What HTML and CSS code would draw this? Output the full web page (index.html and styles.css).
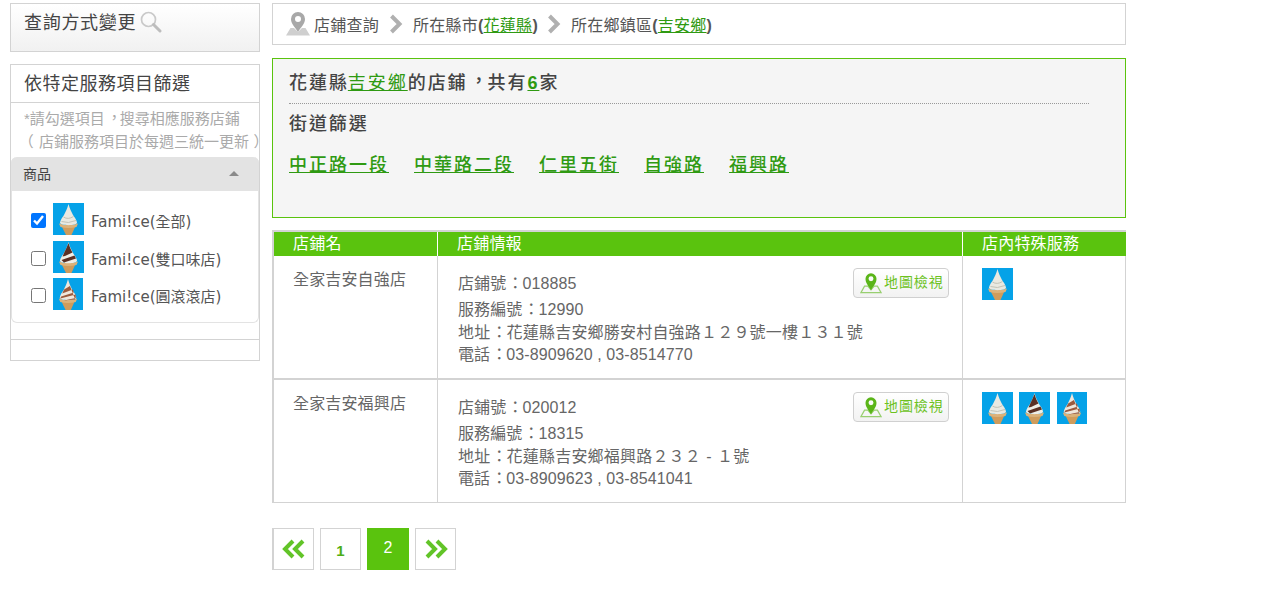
FILE: index.html
```html
<!DOCTYPE html>
<html lang="zh-TW">
<head>
<meta charset="utf-8">
<title>店舖查詢</title>
<link rel="stylesheet" href="styles.css">
</head>
<body>
<svg class="defs" width="0" height="0" aria-hidden="true">
  <defs>
    <g id="cone">
      <rect width="31" height="32" fill="#05a2e8"/>
      <path d="M8 22 L23 22 L18.500 32 L13 32 Z" fill="#cf9c5c"/>
      <path d="M6 20.500 Q15.500 24 25 20.500 L23.500 24 Q15.500 26 7.500 24 Z" fill="#dbb27a"/>
    </g>
    <symbol id="ice-all" viewBox="0 0 31 32" preserveAspectRatio="none">
      <use href="#cone"/>
      <path d="M15.500 1 C16.500 5 18.500 9 20 12 C21.500 14 23.500 17 24 19.500 C24.500 23 6.500 23 7 19.500 C7.500 17 9.500 14 11 12 C12.500 9 14.500 5 15.500 1 Z" fill="#e9e9e1"/>
      <path d="M10.500 14 Q15 17 20.500 13.500 M8.500 18.500 Q15 21 23 17.500" stroke="#c2c2b6" stroke-width="1" fill="none"/>
    </symbol>
    <symbol id="ice-twin" viewBox="0 0 31 32" preserveAspectRatio="none">
      <use href="#cone"/>
      <path d="M15.500 1 C16.500 5 18.500 9 20 12 C21.500 14 23.500 17 24 19.500 C24.500 23 6.500 23 7 19.500 C7.500 17 9.500 14 11 12 C12.500 9 14.500 5 15.500 1 Z" fill="#efeee6"/>
      <path d="M15.500 2 C16.500 6 18 9 19.500 11.500 L12 15 L9.500 15.500 L11.500 11 C13 8 14.500 5 15.500 2 Z M8.500 19 L21.500 14.500 L23 17.500 L11 21.500 Z" fill="#5a3024"/>
    </symbol>
    <symbol id="ice-choco" viewBox="0 0 31 32" preserveAspectRatio="none">
      <use href="#cone"/>
      <path d="M15.500 1 C16.500 5 18.500 9 20 12 C21.500 14 23.500 17 24 19.500 C24.500 23 6.500 23 7 19.500 C7.500 17 9.500 14 11 12 C12.500 9 14.500 5 15.500 1 Z" fill="#f0e7dc"/>
      <path d="M15.500 3 L17.500 8 L11.500 11.500 L9.500 15.500 L20.500 11.500 L21.500 14.500 L8.500 18.500 L7.500 20.500 L23.500 16.500 L23.500 20 L11 22.500 L23 21.500 Z" fill="#9b5a3d"/>
    </symbol>
    <symbol id="pin-map" viewBox="0 0 24 24">
      <path d="M5 16 L1 23 L23 23 L19 16 L15.500 16 L12 20 L8.500 16 Z" fill="none" stroke="currentColor" stroke-width="1.300" opacity=".6"/>
      <path fill-rule="evenodd" d="M12 20.500 C9 15.500 6 12.500 6 8 A6 6 0 0 1 18 8 C18 12.500 15 15.500 12 20.500 Z M12 5.300 A2.700 2.700 0 1 0 12 10.700 A2.700 2.700 0 1 0 12 5.300 Z" fill="currentColor"/>
    </symbol>
    <symbol id="pin-grey" viewBox="0 0 24 24">
      <path d="M4.500 16 L0 23.500 L24 23.500 L19.500 16 L16 16 L12 20 L8 16 Z" fill="#cfcfcf"/>
      <path fill-rule="evenodd" d="M12 20 C8.500 14.500 5 11.500 5 7 A7 7 0 0 1 19 7 C19 11.500 15.500 14.500 12 20 Z M12 4 A3 3 0 1 0 12 10 A3 3 0 1 0 12 4 Z" fill="#a8a8a8"/>
    </symbol>
  </defs>
</svg>
<div class="page">
  <aside class="side">
    <div class="panel change">
      <span>查詢方式變更</span>
      <svg class="search" viewBox="0 0 22 22" width="22" height="22" aria-hidden="true"><circle cx="8.500" cy="8.500" r="7" fill="none" stroke="#c9c9c9" stroke-width="1.700"/><path d="M13.500 13.500 L20 20" stroke="#bdbdbd" stroke-width="3" stroke-linecap="round"/></svg>
    </div>
    <div class="panel filter">
      <h2 class="filter-title">依特定服務項目篩選</h2>
      <p class="note">*請勾選項目<span class="pc">，</span>搜尋相應服務店鋪<br><span class="po">（</span>店鋪服務項目於每週三統一更新<span class="pe">）</span></p>
      <div class="acc">
        <div class="acc-head"><span>商品</span><i class="tri"></i></div>
        <div class="acc-body">
          <label class="opt opt-first"><input type="checkbox" checked><svg class="ice"><use href="#ice-all"/></svg><span>Fami!ce(全部)</span></label>
          <label class="opt"><input type="checkbox"><svg class="ice"><use href="#ice-twin"/></svg><span>Fami!ce(雙口味店)</span></label>
          <label class="opt"><input type="checkbox"><svg class="ice ice-narrow"><use href="#ice-choco"/></svg><span>Fami!ce(圓滾滾店)</span></label>
        </div>
      </div>
      <div class="filter-foot"></div>
    </div>
  </aside>
  <main class="main">
    <nav class="crumb">
      <svg class="crumb-pin" aria-hidden="true"><use href="#pin-grey"/></svg>
      <span>店鋪查詢</span>
      <svg class="chev" viewBox="0 0 14 20" aria-hidden="true"><path d="M2.500 2 L10.500 10 L2.500 18" fill="none" stroke="#b0b0b0" stroke-width="4"/></svg>
      <span>所在縣市<b>(</b><a href="#">花蓮縣</a><b>)</b></span>
      <svg class="chev chev-next" viewBox="0 0 14 20" aria-hidden="true"><path d="M2.500 2 L10.500 10 L2.500 18" fill="none" stroke="#b0b0b0" stroke-width="4"/></svg>
      <span>所在鄉鎮區<b>(</b><a href="#">吉安鄉</a><b>)</b></span>
    </nav>
    <section class="result">
      <h1 class="result-title">花蓮縣<a class="plain" href="#">吉安鄉</a>的店鋪<span class="pc">，</span>共有<a class="strong" href="#">6</a>家</h1>
      <h2 class="street-title">街道篩選</h2>
      <div class="streets"><a href="#">中正路一段</a><a href="#">中華路二段</a><a href="#">仁里五街</a><a href="#">自強路</a><a href="#">福興路</a></div>
    </section>
    <table class="stores">
      <colgroup><col class="c1"><col class="c2"><col class="c3"></colgroup>
      <thead><tr><th>店鋪名</th><th>店鋪情報</th><th>店內特殊服務</th></tr></thead>
      <tbody>
        <tr>
          <td class="name">全家吉安自強店</td>
          <td class="info">
            <a class="map-btn" href="#"><svg class="btn-pin" aria-hidden="true"><use href="#pin-map"/></svg>地圖檢視</a>
            <div class="l1">店鋪號<span class="pm">：</span>018885</div>
            <div class="l2">服務編號<span class="pm">：</span>12990</div>
            <div class="l3">地址<span class="pm">：</span>花蓮縣吉安鄉勝安村自強路１２９號一樓１３１號</div>
            <div>電話<span class="pm">：</span>03-8909620 , 03-8514770</div>
          </td>
          <td class="svc"><svg class="ice"><use href="#ice-all"/></svg></td>
        </tr>
        <tr>
          <td class="name">全家吉安福興店</td>
          <td class="info">
            <a class="map-btn" href="#"><svg class="btn-pin" aria-hidden="true"><use href="#pin-map"/></svg>地圖檢視</a>
            <div class="l1">店鋪號<span class="pm">：</span>020012</div>
            <div class="l2">服務編號<span class="pm">：</span>18315</div>
            <div class="l3">地址<span class="pm">：</span>花蓮縣吉安鄉福興路２３２<span class="dash">-</span>１號</div>
            <div>電話<span class="pm">：</span>03-8909623 , 03-8541041</div>
          </td>
          <td class="svc"><svg class="ice"><use href="#ice-all"/></svg><svg class="ice"><use href="#ice-twin"/></svg><svg class="ice ice-narrow"><use href="#ice-choco"/></svg></td>
        </tr>
      </tbody>
    </table>
    <div class="pager">
      <a class="pg pg-first" href="#"><svg viewBox="0 0 24 20" width="24" height="20" aria-hidden="true"><path d="M11 2 L3 10 L11 18 M21 2 L13 10 L21 18" fill="none" stroke="#62c428" stroke-width="4"/></svg></a>
      <a class="pg pg-num" href="#">1</a>
      <a class="pg on" href="#">2</a>
      <a class="pg" href="#"><svg viewBox="0 0 24 20" width="24" height="20" aria-hidden="true"><path d="M3 2 L11 10 L3 18 M13 2 L21 10 L13 18" fill="none" stroke="#62c428" stroke-width="4"/></svg></a>
    </div>
  </main>
</div>
</body>
</html>
```
FILE: styles.css
```css
* { box-sizing: border-box; }
html, body { margin: 0; padding: 0; }
body {
  background: #fff;
  color: #555;
  font-family: "Liberation Sans", "Noto Sans CJK TC", sans-serif;
  font-size: 16px;
}
.defs { position: absolute; }
a { color: #2f9a12; }
.pc { display: inline-block; transform: translate(.12em, -.1em); }
.pm { display: inline-block; transform: translateX(.06em); }
.po { display: inline-block; transform: translateX(-.35em); }
.pe { display: inline-block; transform: translateX(.3em); }
.dash { display: inline-block; width: 1em; text-align: center; }
.page {
  display: flex;
  gap: 12px;
  padding: 3px 0 0 10px;
  width: 1126px;
}
.side { flex: 0 0 250px; width: 250px; min-width: 0; }
.main { flex: 0 0 854px; min-width: 0; }
.panel { border: 1px solid #d3d3d3; }
.change {
  height: 49px;
  padding: 6px 0 0 13px;
  display: flex;
  align-items: flex-start;
  gap: 4px;
  font-size: 18px;
  letter-spacing: .7px;
  line-height: 26px;
  color: #444;
  background: linear-gradient(#fff, #f1f1f1);
}
.search { margin-top: 1px; }
.filter { margin-top: 12px; height: 297px; }
.filter-title {
  margin: 0;
  height: 38px;
  padding: 6px 0 0 13px;
  font-size: 18px;
  font-weight: 400;
  letter-spacing: .5px;
  line-height: 26px;
  color: #444;
  border-bottom: 1px solid #d3d3d3;
}
.note {
  margin: 0;
  height: 54px;
  padding: 4px 0 0 13px;
  font-size: 15px;
  line-height: 23px;
  color: #aaa;
  white-space: nowrap;
}
.acc {
  height: 166px;
  background: #fff;
  border: 1px solid #e3e3e3;
  border-top: 0;
  border-radius: 6px;
}
.acc-head {
  height: 34px;
  margin: 0 -1px;
  padding: 0 12px 2px;
  background: #e3e3e3;
  border-radius: 6px 6px 0 0;
  display: flex;
  align-items: center;
  justify-content: space-between;
  font-size: 14px;
  color: #444;
}
.tri {
  width: 0;
  height: 0;
  margin-right: 8px;
  border: 5px solid transparent;
  border-top: 0;
  border-bottom: 5px solid #8a8a8a;
}
.acc-body { padding: 12px 0 0 19px; }
.opt {
  display: flex;
  align-items: flex-start;
  gap: 7px;
  height: 37px;
  font-family: "DejaVu Sans", "Noto Sans CJK TC", sans-serif;
  font-size: 15px;
}
.opt-first { height: 38px; }
.opt input { width: 15px; height: 15px; margin: 10px 0 0; }
.opt span { margin-top: 8px; line-height: 22px; }
.ice { display: block; width: 31px; height: 32px; flex: none; }
.ice-narrow { width: 30px; }
.opt .ice-narrow { margin-right: 1px; }
.filter-foot { height: 1px; margin-top: 16px; background: #d3d3d3; }
.crumb {
  height: 42px;
  padding: 0 0 0 13px;
  display: flex;
  align-items: center;
  border: 1px solid #d3d3d3;
  color: #555;
}
.crumb span { letter-spacing: .25px; white-space: nowrap; }
.crumb a { font-weight: 400; }
.crumb-pin { width: 24px; height: 24px; margin-right: 4px; }
.chev { width: 14px; height: 20px; margin: 0 10px; }
.chev-next { margin-left: 9px; }
.result {
  height: 160px;
  margin-top: 13px;
  padding: 12px 15px 0 16px;
  background: #f5f5f5;
  border: 1px solid #5ac30e;
}
.result-title {
  margin: 0;
  width: 800px;
  height: 33px;
  font-size: 18px;
  font-weight: 500;
  letter-spacing: 1.95px;
  line-height: 24px;
  color: #444;
  border-bottom: 1px dotted #999;
}
.plain { font-weight: 400; margin-left: -1px; }
.strong { font-weight: 700; }
.street-title {
  margin: 8px 0 0;
  font-size: 18px;
  font-weight: 500;
  letter-spacing: 1.9px;
  line-height: 24px;
  color: #444;
}
.streets {
  display: flex;
  gap: 25px;
  margin-top: 17px;
  font-size: 18px;
  font-weight: 500;
  letter-spacing: 2px;
  line-height: 24px;
}
.stores {
  width: 854px;
  margin-top: 12px;
  table-layout: fixed;
  border-collapse: separate;
  border-spacing: 0;
  border-top: 2px solid #d3d3d3;
}
.c1 { width: 165px; }
.c2 { width: 525px; }
.c3 { width: 164px; }
.stores th {
  height: 24px;
  padding: 0 0 0 19px;
  background: #5ac30e;
  color: #fff;
  font-weight: 400;
  text-align: left;
  line-height: 24px;
  letter-spacing: .2px;
  border-left: 1px solid #fff;
}
.stores th:first-child { border-left: 2px solid #d3d3d3; }
.stores td {
  vertical-align: top;
  color: #666;
  border-left: 1px solid #d3d3d3;
  border-bottom: 1px solid #d3d3d3;
}
.stores td:first-child { border-left: 2px solid #d3d3d3; }
.stores td:last-child { border-right: 1px solid #d3d3d3; }
.stores tr:first-child td { height: 124px; border-bottom: 2px solid #d3d3d3; }
.stores tr:last-child td { height: 123px; }
.stores .name { padding: 12px 0 0 19px; line-height: 24px; letter-spacing: .15px; }
.info { padding: 16px 13px 0 20px; line-height: 23px; letter-spacing: .1px; }
.l1 { height: 26px; }
.l3 { height: 22px; letter-spacing: .2px; }
.map-btn {
  float: right;
  display: flex;
  align-items: center;
  gap: 2px;
  width: 96px;
  height: 30px;
  margin-top: -4px;
  padding: 0 0 1px 6px;
  border: 1px solid #d0d0d0;
  border-radius: 4px;
  background: linear-gradient(#fff, #f2f2f2);
  color: #6cc21f;
  font-size: 14px;
  letter-spacing: .9px;
  text-decoration: none;
}
.btn-pin { width: 22px; height: 23px; color: #5ab518; }
.svc { padding: 12px 0 0 19px; white-space: nowrap; font-size: 0; }
.svc .ice { display: inline-block; margin-right: 6px; }
.svc .ice-narrow { margin-left: 1px; }
.pager { display: flex; gap: 6px; margin-top: 25px; }
.pg {
  width: 41px;
  height: 42px;
  display: flex;
  align-items: center;
  justify-content: center;
  border: 1px solid #d3d3d3;
  font-size: 15px;
  font-weight: 700;
  color: #4fae14;
  text-decoration: none;
}
.pg-first { width: 42px; border-left-width: 2px; }
.pg-num { padding-top: 3px; }
.pg.on {
  width: 42px;
  padding-bottom: 2px;
  background: #5ac30e;
  border-color: #5ac30e;
  color: #fff;
  font-size: 16px;
  font-weight: 400;
}
```
